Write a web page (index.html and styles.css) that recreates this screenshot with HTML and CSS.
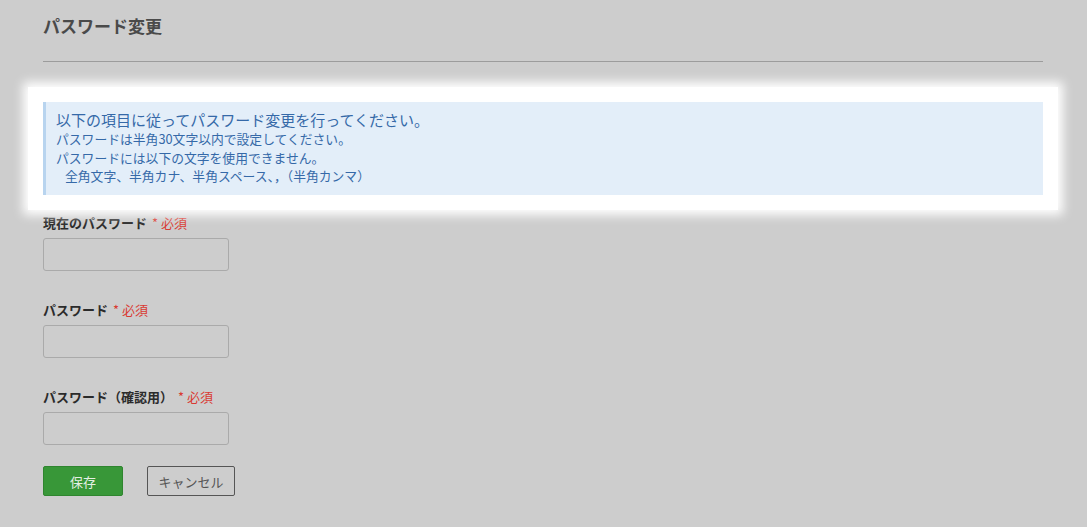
FILE: index.html
```html
<!DOCTYPE html>
<html lang="ja">
<head>
  <meta charset="UTF-8" />
  <meta name="viewport" content="width=device-width, initial-scale=1.0"/>
  <title>パスワード変更</title>
  <link rel="stylesheet" href="styles.css">
</head>
<body>
  <div class="page">
    <div class="page-header">
      <h1>パスワード変更</h1>
    </div>

    <div class="tour-focus">
      <div class="notice">
        <p class="notice-lead">以下の項目に従ってパスワード変更を行ってください。</p>
        <p>パスワードは半角30文字以内で設定してください。</p>
        <p>パスワードには以下の文字を使用できません。</p>
        <p class="indent">全角文字、半角カナ、半角スペース、，（半角カンマ）</p>
      </div>
    </div>

    <form class="form">
      <div class="field">
        <label for="current">現在のパスワード <span class="req">* 必須</span></label>
        <input type="password" id="current">
      </div>
      <div class="field">
        <label for="pw">パスワード <span class="req">* 必須</span></label>
        <input type="password" id="pw">
      </div>
      <div class="field">
        <label for="pw2">パスワード（確認用） <span class="req">* 必須</span></label>
        <input type="password" id="pw2">
      </div>
      <div class="actions">
        <button type="button" class="btn-save">保存</button>
        <button type="button" class="btn-cancel">キャンセル</button>
      </div>
    </form>
  </div>
</body>
</html>
```

FILE: styles.css
```css
body {
  margin: 0;
  background: #cdcdcd;
  font-family: "Noto Sans CJK JP", "Noto Sans", sans-serif;
  color: #2b2b2b;
}
.page {
  padding: 0 44px 0 43px;
}
.page-header {
  padding-top: 15px;
  height: 46px;
  border-bottom: 1px solid #9c9c9c;
}
.page-header h1 {
  margin: 0;
  font-size: 17px;
  line-height: 22px;
  font-weight: bold;
  color: #4a4a4a;
}
.tour-focus {
  margin: 25px -15px 0;
  padding: 15px;
  background: #fff;
  box-shadow: 0 0 10px 5px #fff;
  position: relative;
}
.notice {
  background: #e3eef9;
  border-left: 3px solid #b8d4ef;
  padding: 8px 10px 8px;
  height: 77px;
  color: #3569a8;
}
.notice p {
  margin: 0;
  font-size: 12.8px;
  line-height: 18.5px;
}
.notice .notice-lead {
  font-size: 15px;
  line-height: 20px;
}
.notice .indent {
  padding-left: 9px;
}
.form {
  padding-top: 3px;
}
.field {
  height: 87px;
}
.field label {
  display: block;
  font-size: 13px;
  line-height: 20px;
  font-weight: bold;
  color: #2b2b2b;
}
.req {
  font-weight: normal;
  font-size: 13px;
  color: #d93a32;
  margin-left: 2px;
}
.field input {
  display: block;
  margin-top: 5px;
  width: 186px;
  height: 33px;
  box-sizing: border-box;
  border: 1px solid #aaa;
  border-radius: 3px;
  background: transparent;
}
.actions {
  display: flex;
  gap: 24px;
  margin-top: -8px;
}
.actions button {
  font-family: inherit;
  font-size: 13px;
  height: 30px;
  border-radius: 2px;
  cursor: pointer;
}
.btn-save {
  width: 80px;
  background: #389738;
  border: 1px solid #2f852f;
  color: #e4efe4;
}
.btn-cancel {
  width: 88px;
  background: transparent;
  border: 1px solid #555;
  color: #555;
}
```
